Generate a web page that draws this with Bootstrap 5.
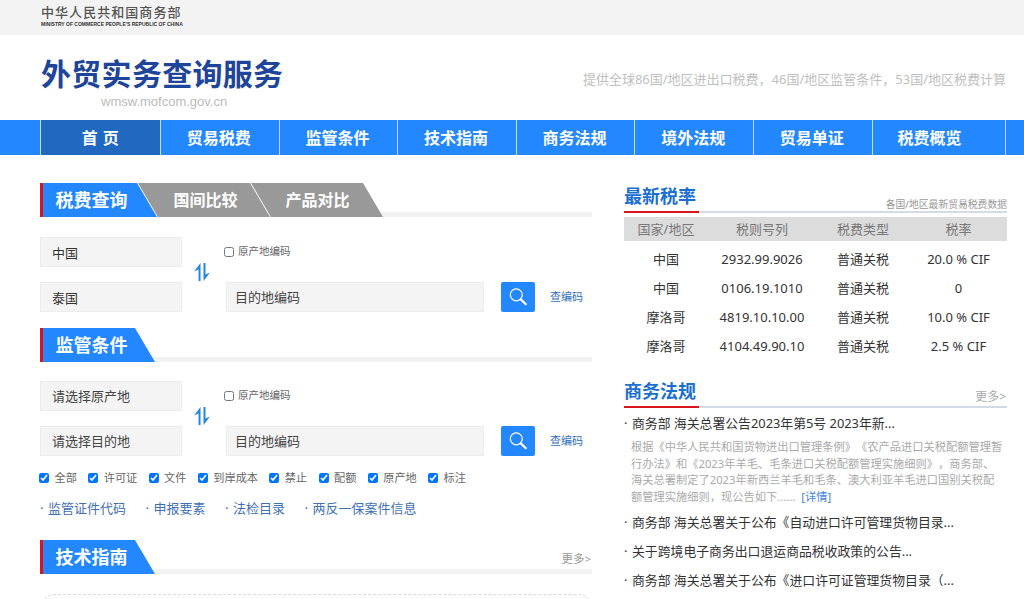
<!DOCTYPE html>
<html lang="zh-CN">
<head>
<meta charset="utf-8">
<title>外贸实务查询服务</title>
<link href="https://cdn.jsdelivr.net/npm/bootstrap@5.3.0/dist/css/bootstrap.min.css" rel="stylesheet">
<style>
html,body{height:599px;overflow:hidden}
body{font-family:"Noto Sans","Noto Sans CJK SC",sans-serif;font-size:13px;color:#333;background:#fff;text-spacing-trim:space-all}
.topstrip{height:35px;background:#f3f3f3;padding:3px 0 0 41px}
.ministry-cn{font-size:13px;line-height:18px;letter-spacing:1.05px;color:#555;font-weight:500}
.ministry-en{font-size:5px;line-height:6px;margin-top:0;color:#333;font-weight:700;font-family:"Liberation Sans",sans-serif;white-space:nowrap}
.brand-row{height:85px;padding:0 18px 0 41px}
.brand-title{font-size:30px;line-height:40px;font-weight:700;color:#1f459a;margin-top:19px;letter-spacing:.3px}
.brand-url{font-size:13px;line-height:16px;color:#bbb;margin:0 0 0 60px;font-family:"Liberation Sans",sans-serif}
.brand-note{font-size:13px;color:#c0c0c0;margin-top:35px;white-space:nowrap}
.mainnav{height:35px;background:#2387ff;padding-left:40px}
.mainnav a{width:118.6px;height:35px;line-height:37px;padding-right:2px;text-align:center;color:#fff;font-size:16px;font-weight:700;text-decoration:none;border-left:1px solid #c4dcfb}
.mainnav a.on{width:120px;padding-right:0;background:#2168c0;letter-spacing:.5px}
.mainnav a.tail{width:134px;padding-right:18px;border-right:1px solid #c4dcfb}
.pagebody{height:444px;overflow:hidden;padding:28px 17px 0 40px;gap:32px}
.leftcol{width:552px}
.rightcol{width:383px}
.tabhead{height:34px;position:relative;border-left:3px solid #d9141c;background:linear-gradient(#fff 29px,#f2f2f2 29px)}
.tabitem{height:34px;line-height:35px;font-size:18px;font-weight:700;color:#fff;text-align:center;text-decoration:none}
.tab-first{width:114px;padding-right:17px;background:#2387ff;clip-path:polygon(0 0,94px 0,100% 100%,0 100%)}
.tab-first.wide{width:112px;padding-right:15px;clip-path:polygon(0 0,92px 0,100% 100%,0 100%)}
.tab-next{width:133px;margin-left:-20px;background:#999;font-size:16px;padding-left:4px;clip-path:polygon(1px 0,113px 0,100% 100%,21px 100%)}
.tab-next.third{padding-left:2px}
.more-link{position:absolute;right:1px;top:10px;font-size:11.5px;color:#999;text-decoration:none}
.querygrid{display:grid;grid-template-columns:142px 44px 258px 17px 34px 15px 40px;grid-template-rows:30px 30px;row-gap:15px;margin-top:20px;align-items:center}
.fieldbox{height:30px;background:#f4f4f4;border:1px solid #ededed;border-radius:0;font-size:13px;color:#333;padding:0 11px;box-shadow:none}
.fieldbox::placeholder{color:#444;opacity:1}
.code-field{padding:0 8px}
.swapcell{grid-column:2;grid-row:1/3;padding-left:12px;line-height:0;margin-top:-5px}
.origincheck{grid-column:3/6;grid-row:1;margin-left:-2px;font-size:10.5px;color:#666;gap:4px}
.origincheck input,.filters input{width:10px;height:10px;margin:0}
.findbtn{grid-column:5;grid-row:2;width:34px;height:30px;background:#2387ff;border:0;border-radius:2px;padding:0;line-height:0}
.findbtn:hover{background:#2387ff}
.codelink{grid-column:7;grid-row:2;font-size:11px;color:#2f6fc0;text-decoration:none;white-space:nowrap}
.filters{margin-top:15px;margin-left:-1px;gap:11.3px;font-size:11.2px;color:#666;line-height:14px}
.filters label{gap:5.5px}
.quicklinks{margin-top:13px;font-size:13px;line-height:20px;gap:19.5px}
.quicklinks a{color:#3f6fb5;text-decoration:none;white-space:nowrap}
.quicklinks a::before{content:"·";display:inline-block;width:8px;color:#3f6fb5}
.dashbox{height:40px;margin:20px 2px 0 3px;border:1px dashed #ddd;border-radius:10px;background:#fcfcfc}
.sidehead{height:30px;position:relative;border-bottom:2px solid #d5dbe5}
.sidehead h2{font-size:18px;line-height:26px;font-weight:700;color:#1a6fd0;margin:0}
.sidehead::after{content:"";position:absolute;left:0;bottom:-2px;width:75px;height:2px;background:#d9141c}
.sidehead span{position:absolute;right:0;bottom:-1px;font-size:9.8px;line-height:14px;color:#999}
.sidehead a{position:absolute;right:1px;bottom:1px;font-size:12px;line-height:16px;color:#aaa;text-decoration:none}
.ratetable{margin:4px 0 0;font-size:13px;table-layout:fixed;--bs-table-border-color:transparent;--bs-table-color:#333}
.ratetable th,.ratetable td{text-align:center;padding:0;border:0;white-space:nowrap}
.ratetable th{height:24px;background:#dcdcdc;font-weight:400;color:#777;line-height:24px}
.ratetable td{height:29px;line-height:29px}
.ratetable tbody tr:first-child td{padding-top:4px;height:33px}
.newslist{list-style:none;margin:0;padding:0}
.newslist li{font-size:12.85px;line-height:20px;color:#333;white-space:nowrap}
.newslist li::before{content:"·";display:inline-block;width:8px}
.newslist li.item-a{margin-top:5px}
.newslist li.item-b{margin-top:9px}
.newslist li.newsabstract{font-size:11.25px;line-height:16.5px;color:#aaa;margin:6px 0 0 7px}
.newslist li.newsabstract::before{content:none}
.newsabstract a{color:#3f86d8;text-decoration:none}
</style>
</head>
<body>
<div class="topstrip">
  <div class="ministry-cn">中华人民共和国商务部</div>
  <div class="ministry-en">MINISTRY OF COMMERCE PEOPLE'S REPUBLIC OF CHINA</div>
</div>
<header class="brand-row d-flex justify-content-between">
  <div>
    <div class="brand-title">外贸实务查询服务</div>
    <div class="brand-url">wmsw.mofcom.gov.cn</div>
  </div>
  <div class="brand-note">提供全球86国/地区进出口税费，46国/地区监管条件，53国/地区税费计算</div>
</header>
<nav class="mainnav d-flex">
  <a class="on" href="#">首 页</a>
  <a href="#">贸易税费</a>
  <a href="#">监管条件</a>
  <a href="#">技术指南</a>
  <a href="#">商务法规</a>
  <a href="#">境外法规</a>
  <a href="#">贸易单证</a>
  <a class="tail" href="#">税费概览</a>
</nav>
<main class="pagebody d-flex">
  <section class="leftcol">
    <div class="tabhead d-flex">
      <a class="tabitem tab-first" href="#">税费查询</a>
      <a class="tabitem tab-next" href="#">国间比较</a>
      <a class="tabitem tab-next third" href="#">产品对比</a>
    </div>
    <div class="querygrid">
      <input class="form-control fieldbox" value="中国" aria-label="原产地">
      <div class="swapcell"><svg width="16" height="18" viewBox="0 0 16 18"><path d="M6.5 0V18H4.5V6.5L0 8.5Z M9.5 18V0H11.5V11.5L16 9.5Z" fill="#2387e0"/></svg></div>
      <label class="origincheck d-flex align-items-center"><input type="checkbox">原产地编码</label>
      <input class="form-control fieldbox" style="grid-column:1;grid-row:2" value="泰国" aria-label="目的地">
      <input class="form-control fieldbox code-field" style="grid-column:3;grid-row:2" placeholder="目的地编码">
      <button class="btn findbtn" aria-label="查询"><svg width="20" height="20" viewBox="0 0 20 20" fill="none" stroke="#fff"><circle cx="8.3" cy="7.8" r="6" stroke-width="1.2"/><path d="M12.8 12.4L17.8 17.2" stroke-width="2.2" stroke-linecap="round"/></svg></button>
      <a class="codelink" href="#">查编码</a>
    </div>
    <div class="tabhead d-flex" style="margin-top:16px">
      <a class="tabitem tab-first wide" href="#">监管条件</a>
    </div>
    <div class="querygrid" style="margin-top:19px">
      <input class="form-control fieldbox" placeholder="请选择原产地">
      <div class="swapcell"><svg width="16" height="18" viewBox="0 0 16 18"><path d="M6.5 0V18H4.5V6.5L0 8.5Z M9.5 18V0H11.5V11.5L16 9.5Z" fill="#2387e0"/></svg></div>
      <label class="origincheck d-flex align-items-center"><input type="checkbox">原产地编码</label>
      <input class="form-control fieldbox" style="grid-column:1;grid-row:2" placeholder="请选择目的地">
      <input class="form-control fieldbox code-field" style="grid-column:3;grid-row:2" placeholder="目的地编码">
      <button class="btn findbtn" aria-label="查询"><svg width="20" height="20" viewBox="0 0 20 20" fill="none" stroke="#fff"><circle cx="8.3" cy="7.8" r="6" stroke-width="1.2"/><path d="M12.8 12.4L17.8 17.2" stroke-width="2.2" stroke-linecap="round"/></svg></button>
      <a class="codelink" href="#">查编码</a>
    </div>
    <div class="filters d-flex">
      <label class="d-flex align-items-center"><input type="checkbox" checked>全部</label>
      <label class="d-flex align-items-center"><input type="checkbox" checked>许可证</label>
      <label class="d-flex align-items-center"><input type="checkbox" checked>文件</label>
      <label class="d-flex align-items-center"><input type="checkbox" checked>到岸成本</label>
      <label class="d-flex align-items-center"><input type="checkbox" checked>禁止</label>
      <label class="d-flex align-items-center"><input type="checkbox" checked>配额</label>
      <label class="d-flex align-items-center"><input type="checkbox" checked>原产地</label>
      <label class="d-flex align-items-center"><input type="checkbox" checked>标注</label>
    </div>
    <div class="quicklinks d-flex">
      <a href="#">监管证件代码</a>
      <a href="#">申报要素</a>
      <a href="#">法检目录</a>
      <a href="#">两反一保案件信息</a>
    </div>
    <div class="tabhead d-flex" style="margin-top:22px">
      <a class="tabitem tab-first wide" href="#">技术指南</a>
      <a class="more-link" href="#">更多&gt;</a>
    </div>
    <div class="dashbox"></div>
  </section>
  <aside class="rightcol">
    <div class="sidehead">
      <h2>最新税率</h2>
      <span>各国/地区最新贸易税费数据</span>
    </div>
    <table class="table table-borderless ratetable">
      <colgroup><col style="width:84px"><col style="width:108px"><col style="width:94px"><col style="width:97px"></colgroup>
      <thead><tr><th>国家/地区</th><th>税则号列</th><th>税费类型</th><th>税率</th></tr></thead>
      <tbody>
        <tr><td>中国</td><td>2932.99.9026</td><td>普通关税</td><td>20.0 % CIF</td></tr>
        <tr><td>中国</td><td>0106.19.1010</td><td>普通关税</td><td>0</td></tr>
        <tr><td>摩洛哥</td><td>4819.10.10.00</td><td>普通关税</td><td>10.0 % CIF</td></tr>
        <tr><td>摩洛哥</td><td>4104.49.90.10</td><td>普通关税</td><td>2.5 % CIF</td></tr>
      </tbody>
    </table>
    <div class="sidehead" style="margin-top:17px">
      <h2>商务法规</h2>
      <a href="#">更多&gt;</a>
    </div>
    <ul class="newslist">
      <li class="item-a">商务部 海关总署公告2023年第5号 2023年新...</li>
      <li class="newsabstract">根据《中华人民共和国货物进出口管理条例》《农产品进口关税配额管理暂<br>行办法》和《2023年羊毛、毛条进口关税配额管理实施细则》，商务部、<br>海关总署制定了2023年新西兰羊毛和毛条、澳大利亚羊毛进口国别关税配<br>额管理实施细则，现公告如下......&nbsp; <a href="#">[详情]</a></li>
      <li class="item-b" style="margin-top:7px">商务部 海关总署关于公布《自动进口许可管理货物目录...</li>
      <li class="item-b">关于跨境电子商务出口退运商品税收政策的公告...</li>
      <li class="item-b">商务部 海关总署关于公布《进口许可证管理货物目录（...</li>
    </ul>
  </aside>
</main>
<script src="https://cdn.jsdelivr.net/npm/bootstrap@5.3.0/dist/js/bootstrap.bundle.min.js"></script>
</body>
</html>
